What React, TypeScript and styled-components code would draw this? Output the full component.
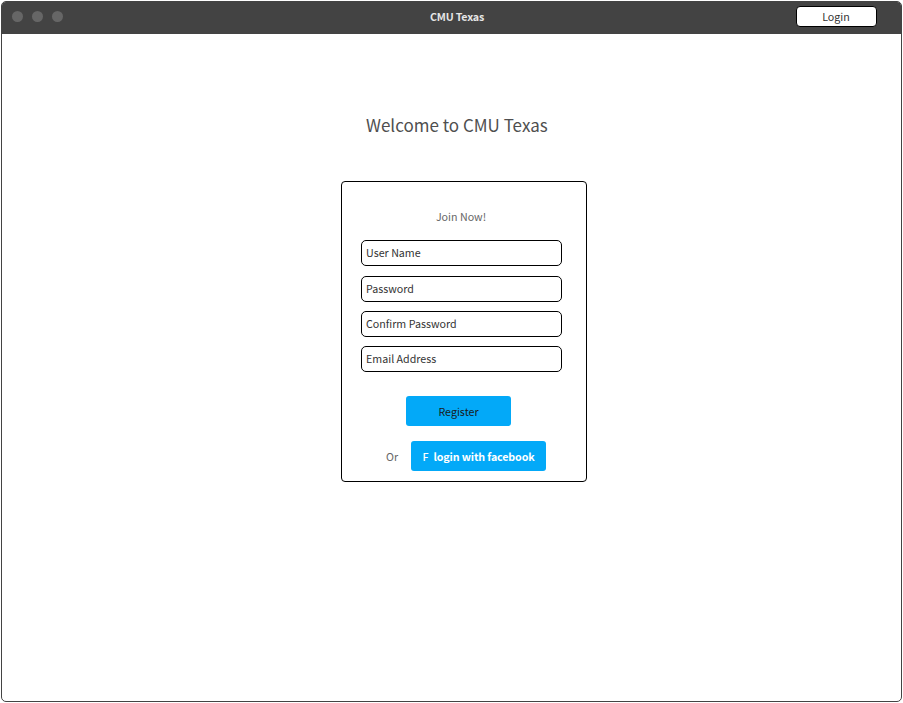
import React from "react";
import styled, { createGlobalStyle } from "styled-components";

const GlobalStyle = createGlobalStyle`
  * { box-sizing: border-box; }
  html, body { margin: 0; background: #fff; }
  body, input, button { font-family: "Noto Sans CJK SC", "Noto Sans", sans-serif; font-size: 10.7px; }
`;

const Window = styled.div`
  width: 901px;
  height: 701px;
  margin: 1px;
  border: 1px solid #434343;
  border-radius: 5px;
  background: #fff;
  overflow: hidden;
`;

const TitleBar = styled.header`
  display: grid;
  grid-template-columns: 1fr auto 1fr;
  align-items: center;
  height: 32px;
  padding: 0 24px 0 10px;
  background: #434343;
`;

const Dots = styled.div`
  display: flex;
  gap: 9px;
  padding-bottom: 4px;
`;

const Dot = styled.span`
  width: 11px;
  height: 11px;
  border-radius: 50%;
  background: #666;
`;

const Title = styled.div`
  padding: 0 0 2px 25px;
  line-height: 16px;
  font-weight: 700;
  letter-spacing: -0.2px;
  color: #e6e6e6;
`;

const LoginButton = styled.button`
  justify-self: end;
  width: 81px;
  height: 21px;
  margin-bottom: 3px;
  padding: 0 1px 0 0;
  border: 1px solid #000;
  border-radius: 4px;
  background: #fff;
  color: #333;
  line-height: 19px;
`;

const Main = styled.main`
  display: flex;
  flex-direction: column;
`;

const Welcome = styled.h1`
  width: 184px;
  margin: 77px 0 0 364px;
  font-size: 17px;
  font-weight: 400;
  line-height: 28px;
  white-space: nowrap;
  color: #4f4f4f;
`;

const Card = styled.form`
  display: flex;
  flex-direction: column;
  width: 246px;
  height: 301px;
  margin: 42px 0 0 339px;
  padding: 26px 24px 10px 19px;
  border: 1px solid #000;
  border-radius: 4px;
`;

const Heading = styled.h2`
  margin: 0 1px 0 0;
  font-size: 10.7px;
  font-weight: 400;
  line-height: 18px;
  text-align: center;
  color: #666;
`;

const Fields = styled.div`
  display: grid;
  grid-template-rows: 36px 35px 35px 26px;
  margin-top: 14px;
`;

const Field = styled.input`
  width: 201px;
  height: 26px;
  padding: 0 4px 2px;
  border: 1px solid #000;
  border-radius: 5px;
  background: #fff;
  outline: none;
  &::placeholder { color: #333; opacity: 1; }
`;

const BlueButton = styled.button<{ $width: number }>`
  width: ${(p) => p.$width}px;
  height: 30px;
  padding: 0;
  border: 0;
  border-radius: 3px;
  background: #03a9f8;
  color: #fff;
  font-weight: 700;
  letter-spacing: -0.13px;
  white-space: pre;
`;

const RegisterButton = styled(BlueButton)`
  margin: 24px 0 0 45px;
  color: #1a1a1a;
  font-weight: 400;
  letter-spacing: 0;
`;

const Alternative = styled.div`
  display: flex;
  align-items: center;
  gap: 13px;
  margin: 15px 0 0 25px;
  color: #666;
  font-weight: 400;
`;

const BrandLetter = styled.span`
  margin-right: 5px;
  font-weight: 500;
`;

const fields = ["User Name", "Password", "Confirm Password", "Email Address"];

export default function App() {
  return (
    <>
      <GlobalStyle />
      <Window>
        <TitleBar>
          <Dots><Dot /><Dot /><Dot /></Dots>
          <Title>CMU Texas</Title>
          <LoginButton>Login</LoginButton>
        </TitleBar>
        <Main>
          <Welcome>Welcome to CMU Texas</Welcome>
          <Card>
            <Heading>Join Now!</Heading>
            <Fields>
              {fields.map((name) => <Field key={name} placeholder={name} aria-label={name} />)}
            </Fields>
            <RegisterButton type="button" $width={105}>Register</RegisterButton>
            <Alternative>
              <span>Or</span>
              <BlueButton type="button" $width={135}>
                <BrandLetter>F</BrandLetter>login with facebook
              </BlueButton>
            </Alternative>
          </Card>
        </Main>
      </Window>
    </>
  );
}
